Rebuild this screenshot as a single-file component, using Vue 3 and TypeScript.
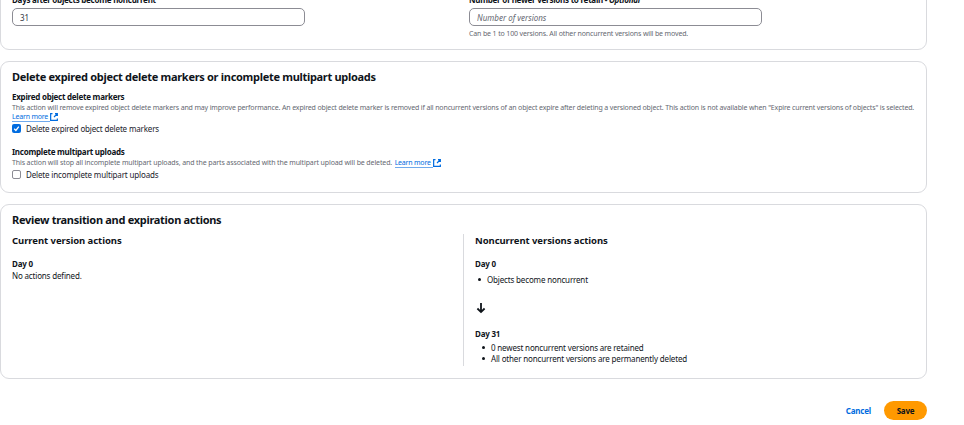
<script setup lang="ts">
import { ref } from 'vue'

const days = ref('31')
const retain = ref('')
const expiredMarkers = ref(true)
const incompleteUploads = ref(false)
</script>

<template>
  <main class="page">
    <section class="card versions">
      <div class="field">
        <label class="label" for="days">Days after objects become noncurrent</label>
        <input id="days" v-model="days" class="input" type="text" />
      </div>
      <div class="field">
        <label class="label" for="retain">Number of newer versions to retain - <i>Optional</i></label>
        <input id="retain" v-model="retain" class="input" type="text" placeholder="Number of versions" />
        <p class="hint">Can be 1 to 100 versions. All other noncurrent versions will be moved.</p>
      </div>
    </section>

    <section class="card cleanup">
      <h2 class="title">Delete expired object delete markers or incomplete multipart uploads</h2>
      <div class="group">
        <h4 class="label">Expired object delete markers</h4>
        <p class="desc">This action will remove expired object delete markers and may improve performance. An expired object delete marker is removed if all noncurrent versions of an object expire after deleting a versioned object. This action is not available when "Expire current versions of objects" is selected.</p>
        <p class="desc">
          <a class="link"><span class="link-text">Learn more</span><svg class="ext" viewBox="0 0 16 16"><path d="M5 1.3H1.3v13.4h13.4V11M10 1.3h4.7V6M14 2 8 8" /></svg></a>
        </p>
        <label class="check">
          <input v-model="expiredMarkers" type="checkbox" />
          <span class="box" :class="{ checked: expiredMarkers }"><svg v-if="expiredMarkers" viewBox="0 0 9 9"><path d="M2.2 4.7 3.9 6.4 6.8 2.6" /></svg></span>
          Delete expired object delete markers
        </label>
      </div>
      <div class="group second">
        <h4 class="label">Incomplete multipart uploads</h4>
        <p class="desc with-link">
          <span>This action will stop all incomplete multipart uploads, and the parts associated with the multipart upload will be deleted.</span>
          <a class="link"><span class="link-text">Learn more</span><svg class="ext" viewBox="0 0 16 16"><path d="M5 1.3H1.3v13.4h13.4V11M10 1.3h4.7V6M14 2 8 8" /></svg></a>
        </p>
        <label class="check">
          <input v-model="incompleteUploads" type="checkbox" />
          <span class="box" :class="{ checked: incompleteUploads }"><svg v-if="incompleteUploads" viewBox="0 0 9 9"><path d="M2.2 4.7 3.9 6.4 6.8 2.6" /></svg></span>
          Delete incomplete multipart uploads
        </label>
      </div>
    </section>

    <section class="card review">
      <h2 class="title">Review transition and expiration actions</h2>
      <div class="columns">
        <div class="column">
          <h3 class="subtitle">Current version actions</h3>
          <h4 class="day">Day 0</h4>
          <p class="text">No actions defined.</p>
        </div>
        <div class="column noncurrent">
          <h3 class="subtitle">Noncurrent versions actions</h3>
          <h4 class="day">Day 0</h4>
          <ul class="list first"><li>Objects become noncurrent</li></ul>
          <svg class="arrow" viewBox="0 0 10 12"><path d="M5 1v9.3M1.4 6.5 5 10.1 8.6 6.5" /></svg>
          <h4 class="day last">Day 31</h4>
          <ul class="list">
            <li>0 newest noncurrent versions are retained</li>
            <li>All other noncurrent versions are permanently deleted</li>
          </ul>
        </div>
      </div>
    </section>

    <footer class="actions">
      <button class="btn cancel" type="button">Cancel</button>
      <button class="btn save" type="button">Save</button>
    </footer>
  </main>
</template>

<style>
body { background: #fff; overflow: hidden; }
</style>

<style scoped>
.page {
  box-sizing: border-box;
  width: 927px;
  height: 425px;
  overflow: hidden;
  font-family: "Noto Sans", "Open Sans", sans-serif;
  font-size: 8px;
  letter-spacing: -0.16px;
  color: #0f141a;
}
.page * { box-sizing: border-box; }
h2, h3, h4, p, ul { margin: 0; padding: 0; }
.card { border: 1px solid #d9dade; border-radius: 9px; padding: 0 11px; background: #fff; }
.versions { display: grid; grid-template-columns: 457px 1fr; height: 70px; margin-top: -20px; padding-top: 13px; }
.field { display: flex; flex-direction: column; }
.label { font-size: 8px; line-height: 12px; font-weight: 700; letter-spacing: -0.25px; white-space: nowrap; }
.input {
  width: 293px; height: 18px; margin-top: 2px; padding: 0 7px;
  border: 1px solid #8c8c94; border-radius: 5px; outline: 0;
  font: 8px/16px "Noto Sans", sans-serif; color: #333843;
}
.input::placeholder { color: #656871; font-style: italic; opacity: 1; }
.hint { margin-top: 2px; font-size: 7px; line-height: 12px; letter-spacing: -0.14px; color: #656871; }
.cleanup { height: 132px; margin-top: 11px; padding-top: 7px; }
.title { font-size: 11px; line-height: 16px; font-weight: 700; letter-spacing: -0.3px; }
.group { margin-top: 6px; }
.second { margin-top: 10px; }
.desc { display: flex; height: 9px; font-size: 7px; line-height: 9px; letter-spacing: -0.145px; color: #656871; white-space: nowrap; }
.with-link { gap: 2.5px; letter-spacing: -0.115px; }
.link { display: inline-flex; color: #006ce0; letter-spacing: -0.2px; }
.link-text { height: 10px; padding-right: 2px; border-bottom: 1px solid #70aaed; }
.ext { width: 8px; height: 8px; margin-top: 1px; fill: none; stroke: #006ce0; stroke-width: 2.4; }
.check { display: flex; align-items: center; height: 15px; letter-spacing: -0.15px; color: #1b222c; }
.check input { display: none; }
.box { display: flex; width: 9px; height: 9px; margin-right: 5px; border: 1px solid #8c8c94; border-radius: 2px; }
.box.checked { border: 0; background: #006ce0; }
.box svg { width: 9px; height: 9px; fill: none; stroke: #fff; stroke-width: 1.3; }
.review { height: 175px; margin-top: 11px; padding-top: 7px; }
.columns { display: grid; grid-template-columns: 451px 1fr; margin-top: 6px; }
.noncurrent { height: 132px; padding-left: 11px; border-left: 1px solid #d9dade; }
.subtitle { font-size: 9.5px; line-height: 13px; letter-spacing: -0.06px; }
.day { margin-top: 11px; font-size: 8px; line-height: 12px; letter-spacing: -0.2px; }
.text { line-height: 11px; }
.list { margin-top: 2px; padding-left: 7px; line-height: 11.5px; list-style: none; }
.list li { display: flex; align-items: center; gap: 6px; }
.list li::before { content: ""; width: 3px; height: 3px; border-radius: 50%; background: #0f141a; }
.first { margin-top: 4px; padding-left: 3px; }
.arrow { display: block; width: 10px; height: 12px; margin-top: 16px; margin-left: 1px; fill: none; stroke: #0f141a; stroke-width: 1.8; }
.last { margin-top: 14px; }
.actions { display: flex; justify-content: flex-end; margin-top: 22px; gap: 13px; }
.btn { height: 19px; padding: 0; border: 0; background: none; font: 700 8px "Noto Sans", sans-serif; letter-spacing: -0.2px; }
.cancel { color: #006ce0; }
.save { width: 43px; border-radius: 10px; background: #ff9900; color: #0f141a; }
</style>
